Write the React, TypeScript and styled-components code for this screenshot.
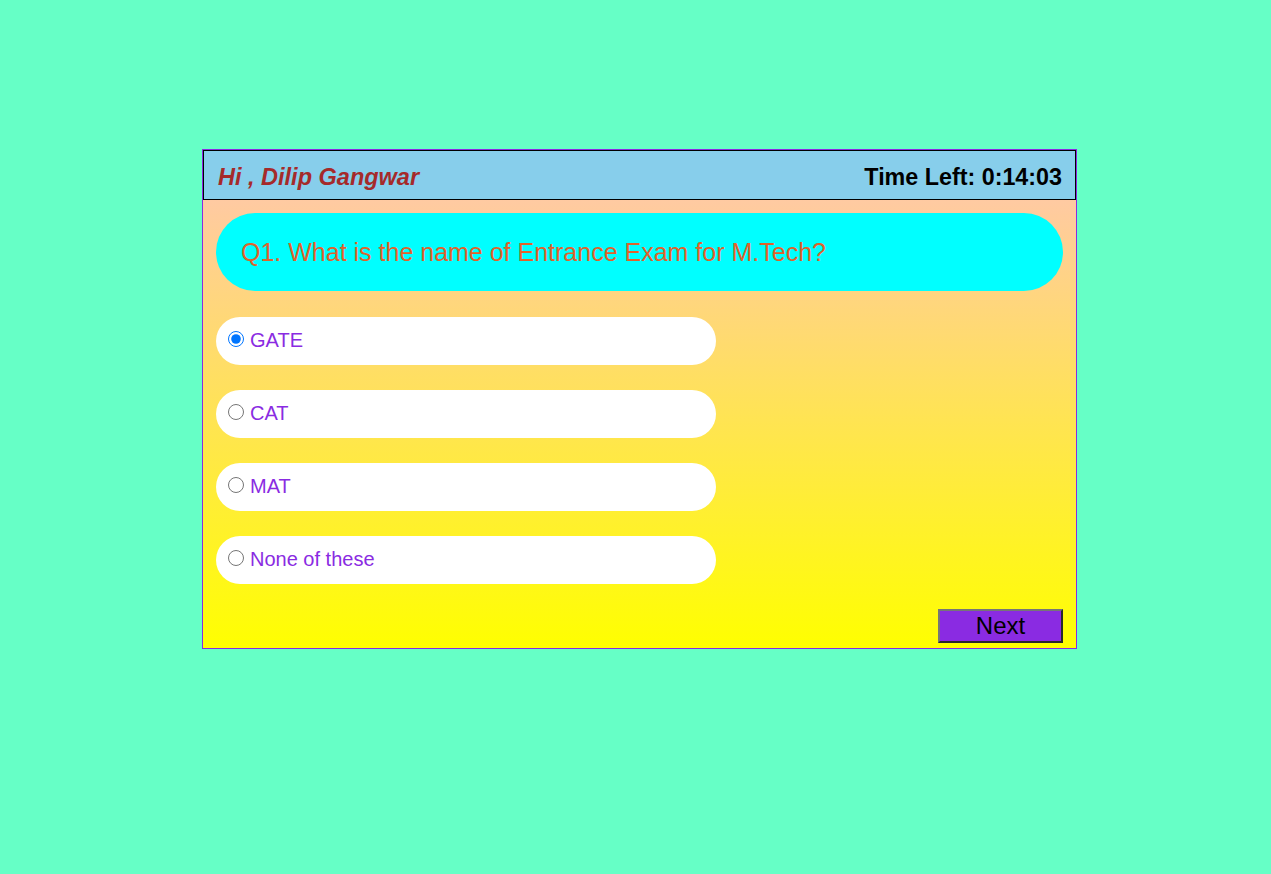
import React, { useState } from "react";
import styled, { createGlobalStyle } from "styled-components";

const Global = createGlobalStyle`
  html, body { margin: 0; padding: 0; background: #66ffc6; }
  body { font-family: "Liberation Sans", Arial, sans-serif; min-height: 874px; }
`;

const Page = styled.div`
  padding: 149px 0 0 202px;
`;

const Card = styled.div`
  width: 873px;
  height: 498px;
  border: 1px solid #8a2be2;
  background: linear-gradient(to bottom, #ffc4b4, #ffff00);
  display: flex;
  flex-direction: column;
`;

const Header = styled.div`
  height: 48px;
  border: 1px solid #000;
  background: #87ceeb;
  display: flex;
  align-items: center;
  justify-content: space-between;
  padding: 0 13px 0 14px;
`;

const Greeting = styled.span`
  color: #a52a2a;
  font-size: 23.5px;
  font-weight: bold;
  font-style: italic;
  padding-top: 5px;
`;

const Timer = styled.span`
  color: #000;
  font-size: 23.3px;
  font-weight: bold;
  padding-top: 5px;
`;

const Body = styled.div`
  padding: 13px 13px 5px 13px;
  display: flex;
  flex-direction: column;
`;

const Question = styled.div`
  height: 78px;
  border-radius: 40px;
  background: #00ffff;
  color: #e0622a;
  font-size: 25px;
  display: flex;
  align-items: center;
  padding-left: 25px;
  margin-bottom: 26px;
`;

const Option = styled.label`
  width: 500px;
  height: 48px;
  border-radius: 24px;
  background: #fff;
  display: flex;
  align-items: center;
  padding: 0 0 2px 11px;
  box-sizing: border-box;
  margin-bottom: 25px;
  color: #8a2be2;
  font-size: 20px;
  cursor: pointer;
`;

const Radio = styled.input`
  width: 16px;
  height: 16px;
  margin: 0 6px 2px 1px;
`;

const Footer = styled.div`
  display: flex;
  justify-content: flex-end;
`;

const NextButton = styled.button`
  width: 125px;
  height: 34px;
  background: #8a2be2;
  border: 2px solid;
  border-color: #767676 #2a2a2a #2a2a2a #767676;
  color: #000;
  font-family: "Liberation Sans", Arial, sans-serif;
  font-size: 24px;
  padding: 0;
  line-height: 28px;
`;

const options = ["GATE", "CAT", "MAT", "None of these"];

export default function App() {
  const [sel, setSel] = useState(0);
  return (
    <>
      <Global />
      <Page>
        <Card>
          <Header>
            <Greeting>Hi , Dilip Gangwar</Greeting>
            <Timer>Time Left: 0:14:03</Timer>
          </Header>
          <Body>
            <Question>Q1. What is the name of Entrance Exam for M.Tech?</Question>
            {options.map((o, i) => (
              <Option key={o}>
                <Radio
                  type="radio"
                  name="q1"
                  checked={sel === i}
                  onChange={() => setSel(i)}
                />
                {o}
              </Option>
            ))}
            <Footer>
              <NextButton>Next</NextButton>
            </Footer>
          </Body>
        </Card>
      </Page>
    </>
  );
}
